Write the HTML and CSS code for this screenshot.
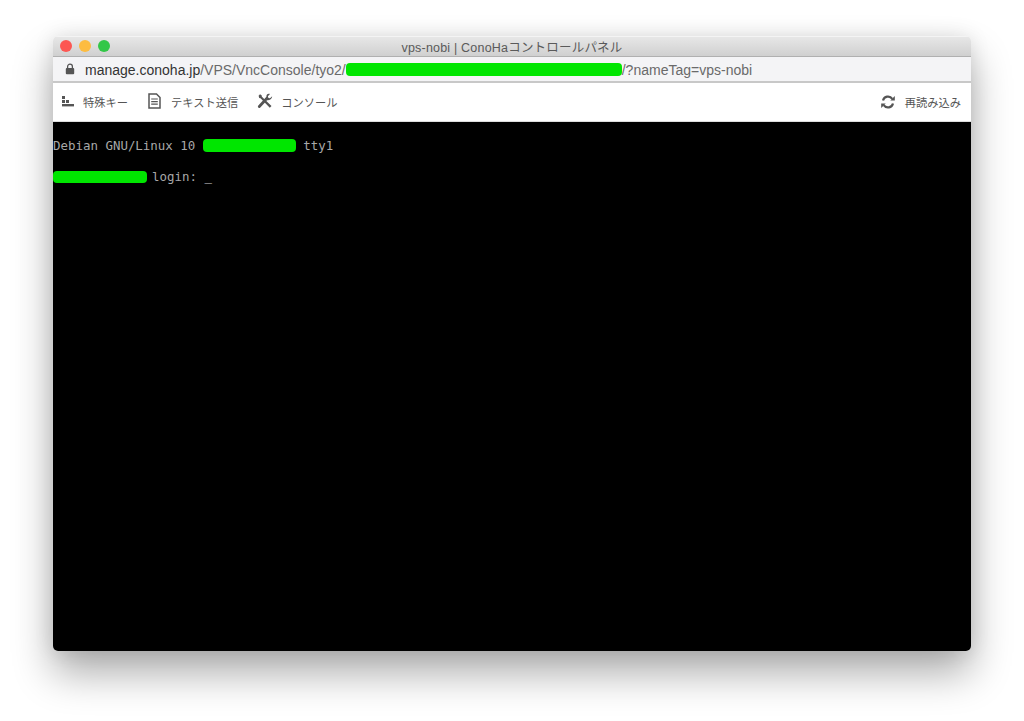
FILE: index.html
```html
<!DOCTYPE html>
<html lang="ja">
<head>
<meta charset="utf-8">
<title>vps-nobi | ConoHaコントロールパネル</title>
<link rel="stylesheet" href="styles.css">
</head>
<body>
<div class="window">
  <header class="titlebar">
    <div class="lights"><span class="light red"></span><span class="light yellow"></span><span class="light green"></span></div>
    <div class="title">vps-nobi | ConoHaコントロールパネル</div>
  </header>
  <div class="urlbar">
    <svg class="lock" width="10" height="12" viewBox="0 0 10 12"><path d="M2.600 5V3.600a2.400 2.400 0 0 1 4.800 0V5" fill="none" stroke="#555" stroke-width="1.3"/><rect x="0.800" y="5" width="8.400" height="6.200" rx="1" fill="#555"/></svg>
    <span class="host">manage.conoha.jp</span><span class="path">/VPS/VncConsole/tyo2/</span><span class="mask mask-url"></span><span class="path">/?nameTag=vps-nobi</span>
  </div>
  <nav class="toolbar">
    <div class="tool tool-keys">
      <svg width="12" height="12" viewBox="0 0 12 12" fill="#555"><rect x="0" y="1" width="3" height="3"/><rect x="0" y="5" width="3" height="3"/><rect x="4" y="5" width="3" height="3"/><rect x="0" y="9" width="12" height="2.400"/></svg>
      <span>特殊キー</span>
    </div>
    <div class="tool tool-text">
      <svg width="13" height="16" viewBox="0 0 13 16" fill="none" stroke="#555" stroke-width="1.500"><path d="M1 1h7.500L12 4.500V15H1z"/><path d="M3.200 6h6.600M3.200 8.600h6.600M3.200 11.200h6.600" stroke-width="1.200"/></svg>
      <span>テキスト送信</span>
    </div>
    <div class="tool tool-console">
      <svg width="16" height="16" viewBox="0 0 16 16" fill="#555"><path d="M1.600 2.800 3 1.200l1.600 1 .3 1.500 9.600 9.200-1.700 1.800-9.300-9.400-1.300-.3z"/><path d="M15.200 3.200 13 5.300l-1.600-.4-.5-1.600L13 1.100C11 .3 9.200 1.600 9.400 3.800L1.300 12.400a1.400 1.400 0 0 0 2 2l5.400-5.700 1.300-1.400c2.400.4 5-1.400 5.200-4.100z"/></svg>
      <span>コンソール</span>
    </div>
    <div class="tool tool-reload">
      <svg width="14" height="14" viewBox="0 0 14 14" fill="none" stroke="#555" stroke-width="2.200"><path d="M2 5.600A5.200 5.200 0 0 1 11.300 3.800"/><path d="M12 8.400A5.200 5.200 0 0 1 2.700 10.200"/><path d="M9.300 5.400h4.500V.9z" fill="#555" stroke="none"/><path d="M4.700 8.600H.2v4.500z" fill="#555" stroke="none"/></svg>
      <span>再読み込み</span>
    </div>
  </nav>
  <main class="terminal">
    <div class="line line-first">Debian GNU/Linux 10 <span class="mask mask-host"></span> tty1</div>
    <div class="line line-second"><span class="mask mask-login"></span> login: <span class="cursor">_</span></div>
  </main>
</div>
</body>
</html>
```

FILE: styles.css
```css
* { box-sizing: border-box; }
html, body { margin: 0; height: 100%; background: #fff; overflow: hidden; }
body { padding: 36px 53px 70px; font-family: "Liberation Sans", "Noto Sans CJK JP", sans-serif; }
.window {
  width: 918px; height: 615px; display: flex; flex-direction: column;
  border-radius: 5px; overflow: hidden;
  box-shadow: 0 22px 40px rgba(0,0,0,.33), 0 0 20px rgba(0,0,0,.1);
}
.titlebar {
  height: 21px; flex: none; display: flex; align-items: center; justify-content: center; position: relative;
  background: linear-gradient(#e8e8e8, #d0d0d0);
  border-bottom: 1px solid #b0b0b0;
  box-shadow: inset 0 1px 0 #f4f4f4;
}
.lights { position: absolute; left: 7px; top: 4px; display: flex; gap: 7px; }
.light { width: 12px; height: 12px; border-radius: 50%; }
.red { background: #fc5753; }
.yellow { background: #fdbc40; }
.green { background: #33c748; }
.title { font-size: 12.500px; letter-spacing: .2px; color: #5a5a5a; }
.urlbar {
  height: 26px; flex: none; display: flex; align-items: center; padding: 2px 0 0 12px;
  background: #f4f4f6; border-bottom: 2px solid #c8c8c8;
  font-size: 14px; color: #6a6a6a; white-space: nowrap;
}
.lock { margin: -2px 10px 0 0; }
.host { color: #333; }
.mask { display: inline-block; background: #00e600; border-radius: 4px; }
.mask-url { width: 276px; height: 13px; margin-top: -2px; }
.toolbar {
  height: 39px; flex: none; display: flex; align-items: center; background: #fff; padding: 0 10px 2px 9px;
  font-size: 11.250px; color: #555; border-bottom: 1px solid #ddd;
}
.tool { display: flex; align-items: center; }
.tool span { padding-top: 2px; }
.tool-keys { gap: 9px; }
.tool-text { gap: 10px; margin-left: 20px; }
.tool-console { gap: 8px; margin-left: 19px; }
.tool-reload { gap: 10px; margin-left: auto; }
.tool-reload svg { margin-top: 2px; }
.terminal {
  flex: 1; background: #000; color: #a8a8a8;
  font-family: "DejaVu Sans Mono", monospace; font-size: 12.450px; line-height: 16px;
}
.line { white-space: pre; display: flex; align-items: center; height: 16px; }
.line-first { margin-top: 16px; }
.line-second { margin-top: 15px; }
.mask-host { width: 93px; height: 13px; margin-top: -1px; }
.mask-login { width: 94px; height: 12px; margin-right: -2.500px; }
.cursor { color: #ccc; }
```
